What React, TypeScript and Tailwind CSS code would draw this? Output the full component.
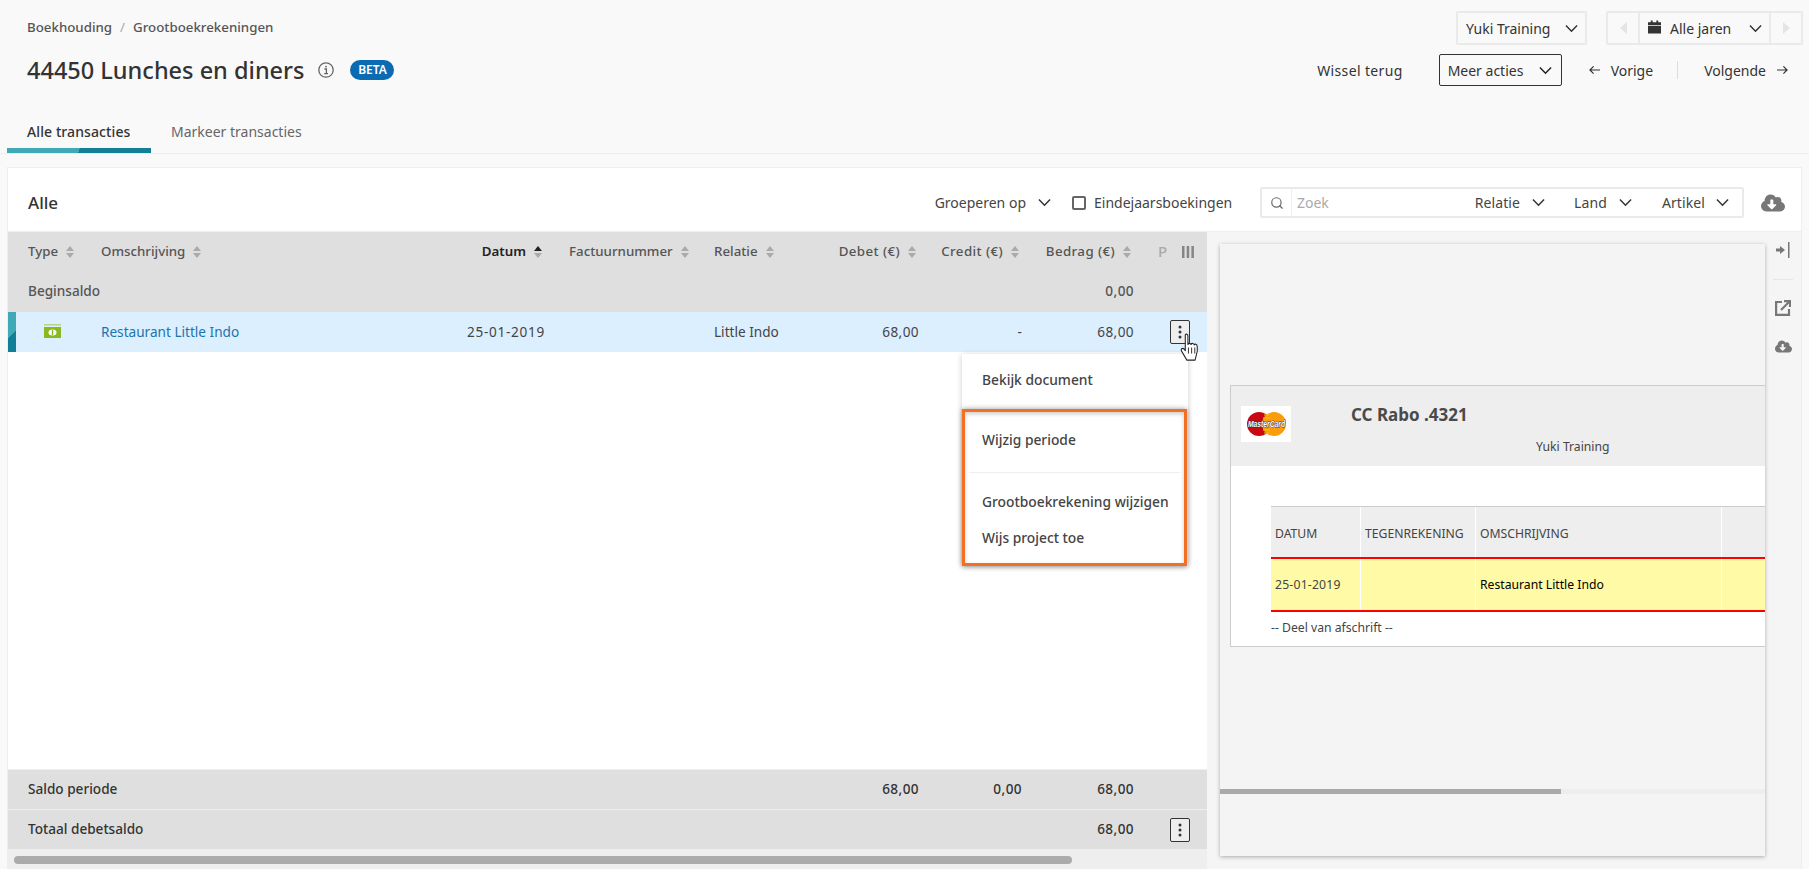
import React from "react";
import { Search } from "lucide-react";
import { FaCloudDownloadAlt } from "react-icons/fa";

function Chev({ cls = "text-[#333]" }: { cls?: string }) {
  return (
    <svg viewBox="0 0 14 9" className={`w-[13px] h-[9px] shrink-0 ${cls}`} fill="none" stroke="currentColor" strokeWidth="1.6">
      <path d="M1 1.2 7 7.4 13 1.2" />
    </svg>
  );
}

function Sort({ active = false }: { active?: boolean }) {
  return (
    <svg viewBox="0 0 8 12" className="w-[8px] h-[12px] shrink-0">
      <path d="M4 0 8 5H0Z" fill={active ? "#222" : "#aaa"} />
      <path d="M4 12 8 7H0Z" fill="#aaa" />
    </svg>
  );
}

function Dots() {
  return (
    <svg viewBox="0 0 4 14" className="w-[4px] h-[14px]" fill="#333">
      <circle cx="2" cy="2" r="1.5" />
      <circle cx="2" cy="7" r="1.5" />
      <circle cx="2" cy="12" r="1.5" />
    </svg>
  );
}

function Th({ label, active = false, right = false }: { label: string; active?: boolean; right?: boolean }) {
  return (
    <div className={`flex items-center gap-[8px] text-[13.300px] ${right ? "justify-end pr-[3px]" : ""}`}>
      <span className={active ? "text-[#222] font-semibold" : right ? "font-medium tracking-[0.4px]" : "font-medium"}>{label}</span>
      <Sort active={active} />
    </div>
  );
}

const rowGrid = "grid grid-cols-[93px_339px_105px_24px_145px_111px_94px_103px_112px_74px] items-center";

function MasterCard() {
  return (
    <div className="w-[50px] h-[36px] bg-white flex items-center justify-center shrink-0">
      <svg viewBox="0 0 39 24" className="w-[39px] h-[24px]">
        <circle cx="12" cy="12" r="12" fill="#c8090f" />
        <circle cx="27" cy="12" r="12" fill="#fb9d0b" />
        <path d="M17 3h5M16 6h7M16 18h7M17 21h5" stroke="#f2c20d" strokeWidth="1" />
        <text x="19.500" y="15" textAnchor="middle" fontFamily="'Liberation Sans', sans-serif" fontStyle="italic" fontWeight="700" fontSize="8.500" fill="#fff" stroke="#2c2f5a" strokeWidth="0.9" paintOrder="stroke" textLength="37" lengthAdjust="spacingAndGlyphs">MasterCard</text>
      </svg>
    </div>
  );
}

export default function App() {
  return (
    <div className="h-[869px] w-[1809px] overflow-hidden bg-[#f9f9f9] text-[14px] text-[#444] flex flex-col font-['Noto_Sans',sans-serif]">
      {/* Page header */}
      <div className="h-[154px] flex flex-col relative">
        <div className="flex justify-between pl-[27px] pr-[6px] pt-[11px] h-[45px]">
          <div className="flex items-center h-[34px] gap-[8px] text-[13.300px] font-medium text-[#555]">
            <span>Boekhouding</span>
            <span className="font-normal text-[#aaa]">/</span>
            <span>Grootboekrekeningen</span>
          </div>
          <div className="flex gap-[19px] h-[34px]">
            <div className="w-[131px] border-2 border-[#eaeaea] rounded-[2px] flex items-center justify-between pl-[8px] pr-[7px] text-[#333]">
              <span>Yuki Training</span>
              <Chev />
            </div>
            <div className="w-[197px] border-2 border-[#eaeaea] rounded-[2px] flex items-stretch">
              <div className="w-[32px] border-r-2 border-[#eaeaea] flex items-center justify-center">
                <svg viewBox="0 0 7 12" className="w-[7px] h-[12px]"><path d="M7 0v12L0 6Z" fill="#e4e4e4" /></svg>
              </div>
              <div className="flex-1 flex items-center pl-[8px] pr-[7px] text-[#333]">
                <svg viewBox="0 0 14 14" className="w-[13px] h-[14px] mr-[9px] mb-[2px]" fill="#333">
                  <path d="M3 0h2v2h4V0h2v2h3v3H0V2h3ZM0 6h14v8H0Z" />
                </svg>
                <span>Alle jaren</span>
                <span className="ml-auto"><Chev /></span>
              </div>
              <div className="w-[32px] border-l-2 border-[#eaeaea] flex items-center justify-center">
                <svg viewBox="0 0 7 12" className="w-[7px] h-[12px]"><path d="M0 0v12l7-6Z" fill="#e4e4e4" /></svg>
              </div>
            </div>
          </div>
        </div>
        <div className="flex justify-between items-center pl-[27px] pr-[21px] h-[32px] mt-[9px] text-[#333]">
          <div className="flex items-center">
            <h1 className="text-[23.500px] leading-[32px] font-medium text-[#333]">44450 Lunches en diners</h1>
            <svg viewBox="0 0 16 16" className="w-[16px] h-[16px] ml-[14px]" fill="none" stroke="#666" strokeWidth="1.3">
              <circle cx="8" cy="8" r="7.2" />
              <path d="M6.4 7h2v4.4M6.2 11.6h3.800" />
              <circle cx="8" cy="4.600" r="0.9" fill="#666" stroke="none" />
            </svg>
            <span className="ml-[16px] w-[44px] h-[20px] rounded-[10px] bg-[#0a6bb3] text-white text-[12px] font-semibold flex items-center justify-center">BETA</span>
          </div>
          <div className="flex items-center">
            <span className="mr-[36px] tracking-[0.35px]">Wissel terug</span>
            <div className="w-[123px] h-[32px] border border-[#333] rounded-[2px] flex items-center justify-between pl-[8px] pr-[9px] mr-[27px]">
              <span>Meer acties</span>
              <Chev cls="text-[#222]" />
            </div>
            <svg viewBox="0 0 12 10" className="w-[11px] h-[10px] mr-[11px]" fill="none" stroke="#333" strokeWidth="1.3"><path d="M12 5H1M5 1 1 5l4 4" /></svg>
            <span>Vorige</span>
            <span className="w-px h-[18px] bg-[#ddd] ml-[24px] mr-[26px]" />
            <span>Volgende</span>
            <svg viewBox="0 0 12 10" className="w-[11px] h-[10px] ml-[11px]" fill="none" stroke="#333" strokeWidth="1.3"><path d="M0 5h11M7 1l4 4-4 4" /></svg>
          </div>
        </div>
        <div className="mt-auto flex items-end pl-[7px] border-b border-[#eeeeee] h-[50px] relative">
          <div className="w-[144px] h-[31px] text-[#333] pl-[20px] whitespace-nowrap leading-[19px] font-medium tracking-[0.1px]">Alle transacties</div>
          <div className="ml-[20px] h-[31px] text-[#666] whitespace-nowrap leading-[19px]">Markeer transacties</div>
          <div className="absolute left-[7px] top-[44px] w-[144px] h-[5px] bg-[linear-gradient(115deg,#3fa9b5_50%,#117f96_50%)]" />
        </div>
      </div>

      {/* Panel */}
      <div className="mt-[13px] ml-[7px] mr-[7px] flex-1 min-h-0 bg-white border-t border-x border-[#eeeeee] flex flex-col">
        {/* Toolbar */}
        <div className="h-[64px] flex items-center pl-[20px] pr-[16px] pt-[6px] shrink-0 border-b border-[#eeeeee]">
          <span className="text-[17px] font-medium text-[#333]">Alle</span>
          <div className="ml-auto flex items-center text-[#444]">
            <span>Groeperen op</span>
            <span className="ml-[12px]"><Chev /></span>
            <span className="w-[14px] h-[14px] border-2 border-[#666] rounded-[2px] ml-[21px] mr-[8px]" />
            <span className="w-[138px]">Eindejaarsboekingen</span>
            <div className="ml-[28px] w-[484px] h-[31px] border-2 border-[#eaeaea] rounded-[2px] flex items-center pl-[8px] pr-[13px]">
              <Search className="w-[14px] h-[14px] text-[#666]" strokeWidth={2} />
              <span className="w-px h-full bg-[#eeeeee] ml-[7px]" />
              <span className="text-[#aaa] ml-[5px]">Zoek</span>
              <span className="ml-auto tracking-[0.1px]">Relatie</span>
              <span className="ml-[12px]"><Chev /></span>
              <span className="ml-[29px] tracking-[0.1px]">Land</span>
              <span className="ml-[12px]"><Chev /></span>
              <span className="ml-[30px] tracking-[0.1px]">Artikel</span>
              <span className="ml-[11px]"><Chev /></span>
            </div>
            <FaCloudDownloadAlt className="w-[24px] h-[24px] text-[#777] ml-[17px]" />
          </div>
        </div>

        <div className="flex-1 min-h-0 flex">
          {/* Table */}
          <div className="w-[1199px] shrink-0 flex flex-col relative text-[13.600px]">
            <div className={`${rowGrid} h-[39px] bg-[#dfdfdf] text-[#555] shrink-0`}>
              <div className="pl-[20px]"><Th label="Type" /></div>
              <div><Th label="Omschrijving" /></div>
              <div><Th label="Datum" active right /></div>
              <div />
              <div><Th label="Factuurnummer" /></div>
              <div><Th label="Relatie" /></div>
              <div><Th label="Debet (€)" right /></div>
              <div><Th label="Credit (€)" right /></div>
              <div><Th label="Bedrag (€)" right /></div>
              <div className="flex items-center text-[#aaa] font-medium">
                <span className="ml-[24px] w-[8px] text-[15px] leading-none">P</span>
                <svg viewBox="0 0 12 12" className="w-[12px] h-[12px] ml-[16px]" fill="#858585">
                  <path d="M0 0h2.500v12H0ZM4.700 0h2.500v12H4.700ZM9.400 0h2.500v12H9.400Z" />
                </svg>
              </div>
            </div>
            <div className={`${rowGrid} h-[41px] bg-[#dfdfdf] text-[#555] font-medium shrink-0`}>
              <div className="pl-[20px] col-span-2">Beginsaldo</div>
              <div className="col-start-9 text-right tracking-[0.4px]">0,00</div>
            </div>
            <div className={`${rowGrid} h-[40px] bg-[#dcefff] text-[#444] shrink-0 relative`}>
              <div className="absolute left-0 top-0 w-[8px] h-full bg-[linear-gradient(135deg,#3fa9b5_55%,#117f96_55%)]" />
              <div className="pl-[36px] flex">
                <svg viewBox="0 0 17 14" className="w-[17px] h-[14px] -mt-[3px]">
                  <path d="M0 0h17v1.500H0Z" fill="#b5d57e" />
                  <path d="M0 3h17v11H0Z" fill="#8ab81f" />
                  <ellipse cx="8.500" cy="8.500" rx="4" ry="3" fill="#fff" />
                  <path d="M7.800 6h1.400v5H7.800Z" fill="#8ab81f" />
                </svg>
              </div>
              <div className="text-[#1a74ad]">Restaurant Little Indo</div>
              <div className="text-right tracking-[0.7px]">25-01-2019</div>
              <div />
              <div />
              <div>Little Indo</div>
              <div className="text-right tracking-[0.4px]">68,00</div>
              <div className="text-right">-</div>
              <div className="text-right tracking-[0.4px]">68,00</div>
              <div className="pl-[36px]">
                <div className="w-[20px] h-[24px] border border-[#333] rounded-[2px] bg-[#eeeeee] flex items-center justify-center"><Dots /></div>
              </div>
              {/* hand cursor */}
              <svg viewBox="0 0 18 24" preserveAspectRatio="none" className="absolute left-[1172px] top-[21px] w-[19px] h-[29px] z-20" fill="#fff" stroke="#222" strokeWidth="1" strokeLinejoin="round">
                <path d="M5 1.500c1-1 2.500-.6 2.500 1v7c.5-1.300 2.500-1.300 3 0 .5-1.200 2.500-1.100 3 .3.7-1 2.500-.6 2.800 1 .3 2 0 6-1 8l-1 3.700H6.500L1.500 15c-1-1.500.5-3 2-2l1.500 1.500Z" />
                <path d="M8 12v5M11 12v5M14 12v5" fill="none" strokeWidth="0.8" />
              </svg>
            </div>

            {/* Dropdown menu */}
            <div className="absolute left-[954px] top-[122px] w-[226px] h-[212px] bg-white shadow-[0_1px_6px_rgba(0,0,0,0.2)] z-10 flex flex-col text-[#444] text-[13.800px]">
              <div className="h-[55px] pt-[15px] pl-[20px] leading-[22px] font-medium">Bekijk document</div>
              <div className="h-[157px] mr-[1px] border-[3px] border-[#f36f21] shadow-[0_0_5px_rgba(0,0,0,0.4),inset_0_2px_4px_rgba(0,0,0,0.2)] flex flex-col pl-[17px]">
                <div className="h-[60px] pt-[17px] leading-[22px] font-medium">Wijzig periode</div>
                <div className="h-px bg-[#eeeeee] -ml-[13px] mr-[4px]" />
                <div className="pt-[18px] leading-[22px] font-medium whitespace-nowrap">Grootboekrekening wijzigen</div>
                <div className="pt-[14px] leading-[22px] font-medium">Wijs project toe</div>
              </div>
            </div>

            <div className="flex-1 min-h-0 bg-white" />
            <div className={`${rowGrid} h-[40px] bg-[#dfdfdf] text-[#333] font-medium shrink-0 border-t border-[#eeeeee]`}>
              <div className="pl-[20px] col-span-2">Saldo periode</div>
              <div className="col-start-7 text-right tracking-[0.4px]">68,00</div>
              <div className="text-right tracking-[0.4px]">0,00</div>
              <div className="text-right tracking-[0.4px]">68,00</div>
            </div>
            <div className={`${rowGrid} h-[40px] bg-[#dfdfdf] text-[#333] font-medium shrink-0 border-t border-[#eeeeee]`}>
              <div className="pl-[20px] col-span-2">Totaal debetsaldo</div>
              <div className="col-start-9 text-right tracking-[0.4px]">68,00</div>
              <div className="pl-[36px]">
                <div className="w-[20px] h-[24px] border border-[#333] rounded-[2px] bg-[#eeeeee] flex items-center justify-center"><Dots /></div>
              </div>
            </div>
            <div className="h-[20px] bg-[#eeeeee] shrink-0 pt-[7px] pl-[6px]">
              <div className="w-[1058px] h-[8px] rounded-[4px] bg-[#ababab]" />
            </div>
          </div>

          {/* Preview */}
          <div className="flex-1 min-w-0 bg-[#f5f5f5] flex items-start">
            <div className="ml-[13px] mt-[12px] w-[545px] h-[612px] bg-[#f4f4f4] shadow-[0_1px_4px_rgba(0,0,0,0.3)] flex flex-col overflow-hidden shrink-0">
              <div className="h-[141px] shrink-0" />
              <div className="ml-[10px] -mr-[40px] h-[262px] shrink-0 bg-white border border-[#cccccc] flex flex-col text-[12.200px] text-[#444]">
                <div className="h-[80px] shrink-0 bg-[#eeeeee] flex pl-[10px] pt-[20px]">
                  <MasterCard />
                  <div className="flex flex-col ml-[60px]">
                    <span className="text-[17px] leading-[18px] font-bold text-[#4a4a4a]">CC Rabo .4321</span>
                    <span className="ml-[185px] mt-[15px] leading-[16px] whitespace-nowrap">Yuki Training</span>
                  </div>
                </div>
                <div className="ml-[40px] mt-[40px] border-t border-[#cccccc]">
                  <div className="grid grid-cols-[90px_115px_246px_1fr] h-[50px] bg-[#eeeeee] items-center">
                    <div className="pl-[4px] pt-[4px] border-r border-white h-full flex items-center">DATUM</div>
                    <div className="pl-[4px] pt-[4px] border-r border-white h-full flex items-center">TEGENREKENING</div>
                    <div className="pl-[4px] pt-[4px] border-r border-white h-full flex items-center">OMSCHRIJVING</div>
                    <div />
                  </div>
                  <div className="grid grid-cols-[90px_115px_246px_1fr] h-[55px] bg-[#fffaa5] border-y-2 border-[#ff0000] items-center">
                    <div className="pl-[4px] pt-[1px] border-r border-white h-full flex items-center tracking-[0.2px]">25-01-2019</div>
                    <div className="border-r border-white h-full" />
                    <div className="pl-[4px] pt-[1px] border-r border-white h-full flex items-center text-black">Restaurant Little Indo</div>
                    <div />
                  </div>
                  <div className="mt-[7px] leading-[18px]">-- Deel van afschrift --</div>
                </div>
              </div>
              <div className="h-[5px] bg-[#eeeeee] mt-[142px] shrink-0">
                <div className="w-[341px] h-full bg-[#a9a9a9]" />
              </div>
            </div>
            <div className="flex-1 flex flex-col items-center pt-[10px] text-[#777]">
              <svg viewBox="0 0 14 16" className="w-[14px] h-[16px]" fill="#777">
                <path d="M12 0h1.500v16H12ZM0 6.500h4V4l5 4-5 4V9.500H0Z" />
              </svg>
              <div className="w-[20px] h-px bg-[#e6e6e6] mt-[21px]" />
              <svg viewBox="0 0 16 16" className="w-[16px] h-[16px] mt-[20px]" fill="none" stroke="#777" strokeWidth="2.200">
                <path d="M7 2H1.100v12.900H14V9M6 10l8-8M9 1.100h6v6" />
              </svg>
              <FaCloudDownloadAlt className="w-[17px] h-[17px] mt-[22px]" />
            </div>
          </div>
        </div>
      </div>
    </div>
  );
}
